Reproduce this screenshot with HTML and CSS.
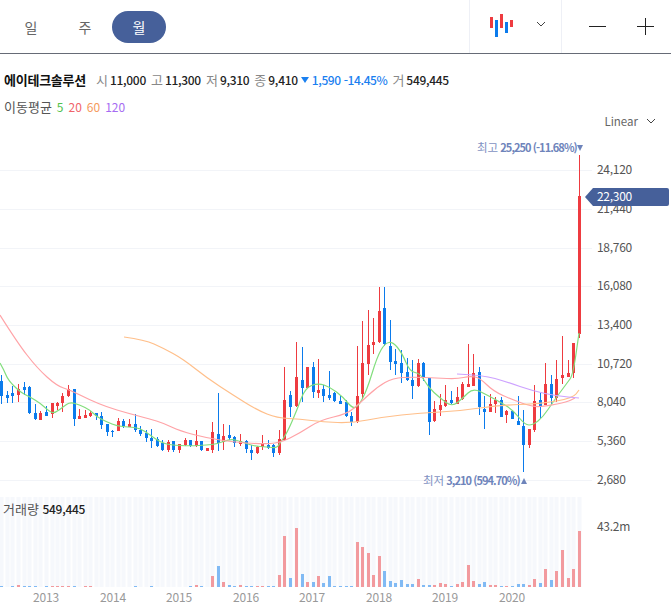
FILE: index.html
```html
<!DOCTYPE html>
<html lang="ko">
<head>
    <meta charset="UTF-8">
    <title>에이테크솔루션 월봉 차트</title>
    <link rel="stylesheet" href="styles.css">
</head>
<body>

    <!-- top bar -->
    <div class="toolbar">
        <div class="tabs">
            <div class="tab">일</div>
            <div class="tab">주</div>
            <div class="tab active">월</div>
        </div>
        <div class="chart-type">
            <svg class="candle-icon" width="24" height="24" viewBox="0 0 24 24">
                <rect x="0" y="3" width="3" height="11" fill="#ee3b40"></rect>
                <rect x="5" y="6" width="3" height="17" fill="#0b7bec"></rect>
                <rect x="10" y="0" width="3" height="14" fill="#ee3b40"></rect>
                <rect x="15" y="8" width="3" height="11" fill="#0b7bec"></rect>
                <rect x="20" y="6" width="3" height="7" fill="#ee3b40"></rect>
            </svg>
            <svg class="chevron" width="10" height="6" viewBox="0 0 10 6">
                <path d="M1 1l4 4 4-4" fill="none" stroke="#444" stroke-width="1"></path>
            </svg>
        </div>
        <div class="zoom-buttons">
            <svg width="18" height="18" viewBox="0 0 18 18">
                <path d="M0 8.5h17" stroke="#222" stroke-width="1"></path>
            </svg>
            <svg width="18" height="18" viewBox="0 0 18 18">
                <path d="M0 8.5h17M8.5 0v17" stroke="#222" stroke-width="1"></path>
            </svg>
        </div>
    </div>

    <!-- price summary -->
    <div class="info-row">
        <span class="stock-name">에이테크솔루션</span>
        <span class="label">시</span><span class="value">11,000</span>
        <span class="label">고</span><span class="value">11,300</span>
        <span class="label">저</span><span class="value">9,310</span>
        <span class="label">종</span><span class="value">9,410</span>
        <span class="change"><span class="down-arrow"></span>1,590 -14.45%</span>
        <span class="label">거</span><span class="value">549,445</span>
    </div>

    <div class="ma-row">
        <span class="ma-title">이동평균</span>
        <span class="ma5">5</span>
        <span class="ma20">20</span>
        <span class="ma60">60</span>
        <span class="ma120">120</span>
    </div>

    <div class="scale-row">
        <span>Linear</span>
        <svg class="chevron" width="10" height="6" viewBox="0 0 10 6">
            <path d="M1 1l4 4 4-4" fill="none" stroke="#444" stroke-width="1"></path>
        </svg>
    </div>

    <!-- chart, filled by chart.js -->
    <svg id="chart" class="chart" viewBox="0 135 671 480" width="671" height="480"></svg>

    <script src="chart.js"></script>
</body>
</html>
```

FILE: styles.css
```css
html, body {
    margin: 0;
    padding: 0;
    background: #fff;
    overflow: hidden;
}

body {
    width: 671px;
    height: 615px;
    display: flex;
    flex-direction: column;
    font-family: "Noto Sans CJK KR", "Noto Sans", sans-serif;
    font-size: 12px;
    color: #222;
}

/* top bar */
.toolbar {
    height: 53px;
    flex: none;
    display: flex;
    border-bottom: 1px solid #666b76;
}

.tabs {
    flex: 1;
    display: flex;
    align-items: center;
    padding-left: 4px;
}

.tab {
    width: 54px;
    height: 32px;
    line-height: 32px;
    text-align: center;
    font-size: 14px;
    color: #666;
    border-radius: 16px;
    margin-top: 1px;
}

.tab.active {
    background-color: #46609a;
    color: #fff;
}

.chart-type {
    flex: none;
    width: 71px;
    display: flex;
    align-items: center;
    border-left: 1px solid #eef0f6;
    border-right: 1px solid #eef0f6;
    padding-left: 20px;
}

.candle-icon {
    margin-top: -1px;
}

.chart-type .chevron {
    margin-left: 22px;
    margin-top: -5px;
}

.zoom-buttons {
    width: 109px;
    flex: none;
    display: flex;
    align-items: center;
    gap: 30px;
    padding-left: 27px;
    box-sizing: border-box;
}

/* price summary */
.info-row {
    height: 18px;
    line-height: 18px;
    margin-top: 17px;
    padding-left: 4px;
    display: flex;
    white-space: nowrap;
}

.stock-name {
    font-size: 13px;
    font-weight: 700;
    color: #111;
    letter-spacing: -0.25px;
    margin-right: 10px;
}

.label {
    font-size: 13px;
    color: #888;
    margin-right: 2px;
}

.value {
    font-weight: 500;
    color: #222;
    letter-spacing: -0.3px;
    margin-right: 5px;
}

.change {
    font-weight: 500;
    color: #1a80f0;
    letter-spacing: -0.4px;
    margin-left: -2px;
    margin-right: 5px;
    display: flex;
    align-items: center;
}

.down-arrow {
    width: 0;
    height: 0;
    border-left: 4px solid transparent;
    border-right: 4px solid transparent;
    border-top: 6px solid #1a80f0;
    margin-right: 3px;
}

.ma-row {
    height: 18px;
    line-height: 18px;
    margin-top: 9px;
    padding-left: 4px;
    display: flex;
    gap: 5px;
}

.ma-title { font-size: 13px; color: #555; }
.ma5 { color: #4fc24a; }
.ma20 { color: #f0646a; }
.ma60 { color: #f59a5c; }
.ma120 { color: #a66cf2; }

.scale-row {
    height: 16px;
    line-height: 16px;
    margin-top: -3px;
    margin-bottom: 6px;
    padding-right: 15px;
    display: flex;
    justify-content: flex-end;
    align-items: center;
    gap: 8px;
    font-size: 11.5px;
    color: #666;
    flex: none;
}

/* chart */
.chart {
    display: block;
    flex: none;
}

.chart text {
    font-family: "Noto Sans CJK KR", "Noto Sans", sans-serif;
    font-size: 12px;
}

.chart .axis-label { fill: #555; letter-spacing: -0.3px; }
.chart .year-label { fill: #999; letter-spacing: -0.2px; }
.chart .now-label { fill: #fff; letter-spacing: -0.3px; }
.chart .peak-label { fill: #6e84bb; font-size: 11px; font-weight: 700; letter-spacing: -0.95px; }
.chart .peak-title { fill: #7f92c2; font-size: 11.5px; font-weight: 400; letter-spacing: 0; }
.chart .vol-title { fill: #555; font-size: 13px; }
.chart .vol-value { fill: #222; font-size: 12px; font-weight: 500; letter-spacing: -0.3px; }
```

FILE: chart.js
```js
// x, wick top, body top, body bottom, wick bottom, r = up / b = down
var candles = [
    [1,375,381,396,404,'b'],[7,391,395,398,403,'b'],[12,386,393,396,403,'b'],[18,384,389,395,402,'r'],
    [24,382,387,390,395,'b'],[29,386,387,413,414,'b'],[35,404,413,419,420,'b'],[40,411,413,420,420,'r'],
    [46,406,412,416,416,'b'],[52,403,403,414,418,'r'],[57,402,403,406,410,'r'],[62,393,396,403,412,'r'],
    [68,385,389,396,397,'r'],[74,389,389,419,426,'b'],[79,409,416,419,419,'r'],[85,410,415,418,418,'r'],
    [90,411,413,416,417,'r'],[96,413,413,416,420,'b'],[101,412,416,425,429,'b'],[107,424,424,432,436,'b'],
    [112,430,431,432,437,'b'],[118,418,421,431,431,'r'],[123,419,421,426,428,'b'],[129,419,424,427,427,'r'],
    [135,414,424,430,432,'b'],[140,426,430,434,436,'b'],[146,430,433,438,442,'b'],[151,429,438,441,448,'b'],
    [157,437,439,446,447,'b'],[162,440,443,450,451,'b'],[168,440,442,450,452,'r'],[173,441,441,450,452,'b'],
    [179,444,444,450,453,'r'],[185,438,440,445,446,'r'],[190,440,440,446,447,'b'],[196,430,441,446,447,'r'],
    [201,441,441,450,451,'b'],[207,448,448,451,451,'r'],[212,422,432,450,453,'r'],[218,393,434,443,451,'b'],
    [223,424,436,442,450,'r'],[229,425,435,438,440,'b'],[234,436,437,443,447,'b'],[240,434,441,444,446,'r'],
    [246,440,441,449,453,'b'],[251,445,450,453,460,'b'],[257,446,447,453,454,'r'],[262,435,444,447,450,'r'],
    [268,440,445,448,449,'b'],[273,444,445,453,457,'b'],[279,430,439,453,455,'r'],[284,367,400,440,441,'r'],
    [290,391,395,407,417,'b'],[296,342,377,406,407,'r'],[302,347,380,388,402,'b'],[307,367,367,388,388,'r'],
    [313,362,367,392,398,'b'],[318,359,390,393,398,'r'],[323,385,389,396,402,'b'],[329,371,395,398,400,'b'],
    [334,392,393,401,402,'b'],[340,396,401,404,404,'b'],[346,400,402,416,417,'b'],[351,412,416,422,426,'b'],
    [357,346,396,422,423,'r'],[362,321,363,394,398,'r'],[368,310,345,364,375,'r'],[373,318,342,345,354,'r'],
    [379,287,311,342,343,'r'],[384,287,308,344,346,'b'],[390,320,346,362,370,'b'],[395,349,361,364,375,'b'],
    [401,350,363,373,383,'b'],[407,358,372,380,381,'b'],[412,360,380,386,399,'b'],[418,359,363,386,387,'r'],
    [423,362,363,377,381,'b'],[429,378,378,422,435,'b'],[434,401,409,421,422,'r'],[440,394,405,410,416,'r'],
    [445,385,400,406,407,'r'],[451,391,400,403,404,'b'],[457,387,397,404,404,'r'],[462,382,384,399,400,'r'],
    [468,344,384,387,387,'r'],[473,354,373,386,386,'r'],[479,367,372,407,415,'b'],[484,396,409,412,429,'b'],
    [490,394,404,412,412,'r'],[495,397,400,404,413,'r'],[501,397,400,417,417,'b'],[506,410,411,415,423,'r'],
    [512,410,411,419,419,'b'],[518,396,421,425,425,'b'],[523,410,426,445,472,'b'],[529,429,429,445,448,'r'],
    [534,385,401,430,432,'r'],[540,393,400,407,419,'b'],[545,363,384,405,405,'r'],[551,375,384,398,404,'b'],
    [556,360,379,398,402,'r'],[562,336,375,378,384,'r'],[568,360,373,377,377,'r'],[573,343,343,373,378,'r'],
    [579,155,196,334,338,'r']
];

// volume bar height by candle x
var volumes = {
    1:1,12:1,18:2,24:1,29:1,35:1,46:1,52:1,57:1,62:1,68:1,74:1,85:1,90:1,135:1,151:1,190:1,196:2,201:1,
    212:11,218:21,223:5,229:2,240:2,234:1,246:1,251:1,257:1,262:1,268:1,273:1,
    279:12,284:51,290:9,296:59,302:13,307:5,313:5,318:11,323:4,329:11,334:1,340:1,346:1,351:1,
    357:45,362:40,368:34,373:12,379:31,384:16,390:6,395:4,401:7,407:3,412:3,418:8,423:2,429:2,434:2,
    440:4,445:3,451:1,457:3,462:5,468:22,473:6,479:3,484:5,490:2,495:2,501:1,506:1,512:1,518:3,523:3,
    529:2,534:8,540:4,545:18,551:7,556:16,562:37,568:9,573:18,579:56
};

var lines = [
    { color: '#82de7d', points: [[0,363],[4,370],[8,380],[20,392],[30,397],[40,403],[50,412],[55,413],[63,407],[70,402],[80,405],[90,410],[97,417],[107,422],[117,426],[128,427],[140,428],[150,435],[160,442],[170,445],[190,446],[207,445],[217,444],[230,439],[240,441],[253,446],[267,447],[277,448],[280,443],[287,433],[297,410],[305,388],[318,383],[330,387],[343,397],[352,408],[358,407],[367,390],[377,357],[385,343],[393,342],[402,353],[410,372],[420,373],[428,387],[440,398],[452,407],[463,398],[473,388],[487,395],[500,402],[513,410],[525,425],[533,425],[543,417],[553,402],[567,383],[573,375],[579,333]] },
    { color: '#ffa3a7', points: [[0,315],[17,342],[37,368],[57,386],[70,390],[90,400],[107,407],[127,413],[150,419],[163,423],[180,431],[207,438],[233,442],[260,444],[280,443],[300,433],[320,420],[347,414],[360,403],[377,387],[393,378],[413,377],[437,378],[457,379],[470,376],[480,378],[493,391],[513,400],[533,407],[547,406],[567,402],[575,398]] },
    { color: '#ffbf8a', points: [[124,337],[145,340],[163,348],[183,359],[207,378],[233,395],[257,410],[277,418],[300,419],[323,422],[352,423],[383,417],[420,413],[460,411],[500,405],[540,404],[573,398],[579,390]] },
    { color: '#cda2ff', points: [[457,374],[483,375],[507,382],[533,391],[557,396],[579,398]] }
];

var axis = ['24,120','21,440','18,760','16,080','13,400','10,720','8,040','5,360','2,680'];
var axisY = [170,209,248,286,325,364,402,441,480];
var years = [[2013,46],[2014,113],[2015,179],[2016,246],[2017,312],[2018,379],[2019,445],[2020,512]];

var colors = { r: '#ee3b40', b: '#0b7bec' };
var chart = document.getElementById('chart');

function add(tag, attrs, text) {
    var el = document.createElementNS('http://www.w3.org/2000/svg', tag);
    for (var key in attrs) {
        el.setAttribute(key, attrs[key]);
    }
    if (text) {
        el.textContent = text;
    }
    chart.appendChild(el);
    return el;
}

function smoothPath(points) {
    var d = 'M' + points[0][0] + ' ' + points[0][1];
    for (var i = 1; i < points.length - 1; i++) {
        var midX = (points[i][0] + points[i + 1][0]) / 2;
        var midY = (points[i][1] + points[i + 1][1]) / 2;
        d += 'Q' + points[i][0] + ' ' + points[i][1] + ' ' + midX + ' ' + midY;
    }
    var last = points[points.length - 1];
    return d + 'L' + last[0] + ' ' + last[1];
}

// grid and right axis
axisY.forEach(function (y, i) {
    add('rect', { x: 0, y: y, width: 592, height: 1, fill: '#f2f4f8' });
    add('text', { x: 597, y: y + 4, 'class': 'axis-label' }, axis[i]);
});

// volume panel stripes and bars
candles.forEach(function (c) {
    add('rect', { x: c[0] - 1.5, y: 497, width: 4, height: 90, fill: '#f6f8fc' });
});
candles.forEach(function (c) {
    var h = volumes[c[0]];
    if (h) {
        add('rect', { x: c[0] - 1, y: 587 - h, width: 3, height: h, fill: colors[c[5]], opacity: 0.5 });
    }
});

// candles
candles.forEach(function (c) {
    add('rect', { x: c[0], y: c[1], width: 1, height: c[4] - c[1], fill: colors[c[5]] });
    add('rect', { x: c[0] - 1, y: c[2], width: 3, height: Math.max(c[3] - c[2], 1), fill: colors[c[5]] });
});

// moving averages
lines.forEach(function (line) {
    add('path', { d: smoothPath(line.points), fill: 'none', stroke: line.color, 'stroke-width': 1.2 });
});

// high and low marks
var high = add('text', { x: 477, y: 152, 'class': 'peak-label' });
high.innerHTML = '<tspan class="peak-title">최고</tspan> 25,250 (-11.68%)';
add('path', { d: 'M577 145h6l-3 6z', fill: '#6e84bb' });

var low = add('text', { x: 423, y: 485, 'class': 'peak-label' });
low.innerHTML = '<tspan class="peak-title">최저</tspan> 3,210 (594.70%)';
add('path', { d: 'M521 484h6l-3 -6z', fill: '#6e84bb' });

// current price tag
add('path', { d: 'M585 197l8 -9h74a2 2 0 0 1 2 2v14a2 2 0 0 1 -2 2h-74z', fill: '#46609a' });
add('text', { x: 597, y: 201, 'class': 'now-label' }, '22,300');

// volume title and axis
var title = add('text', { x: 3, y: 514, 'class': 'vol-title' });
title.innerHTML = '거래량 <tspan class="vol-value">549,445</tspan>';
add('text', { x: 597, y: 531, 'class': 'axis-label' }, '43.2m');

years.forEach(function (item) {
    add('text', { x: item[1], y: 602, 'text-anchor': 'middle', 'class': 'year-label' }, String(item[0]));
});
```
